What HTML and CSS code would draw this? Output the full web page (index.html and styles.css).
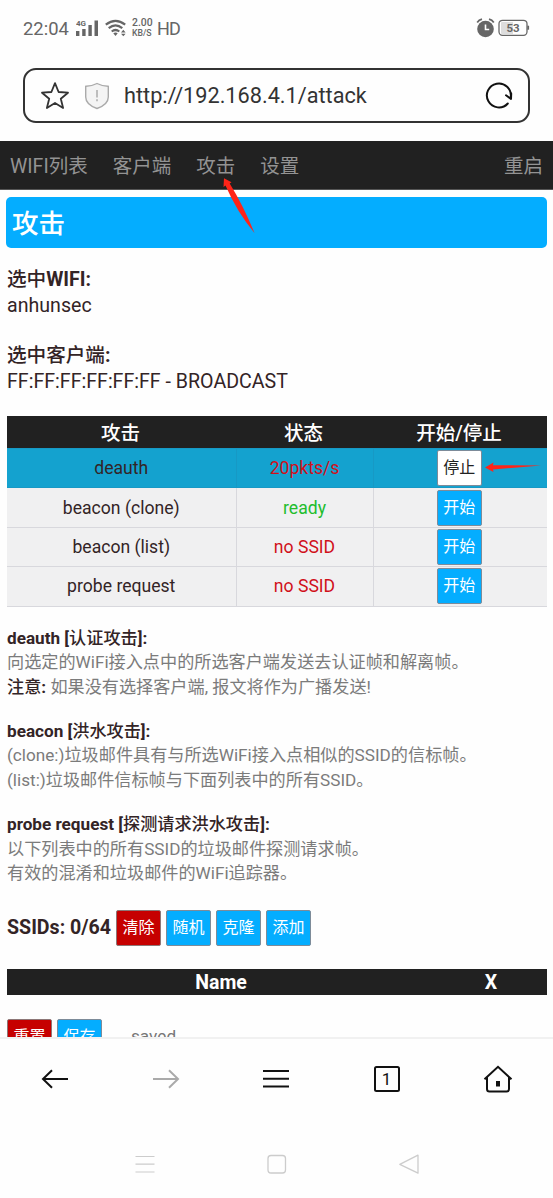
FILE: index.html
```html
<!DOCTYPE html>
<html lang="zh-CN">
<head>
<meta charset="utf-8">
<title>攻击</title>
<link rel="stylesheet" href="styles.css">
</head>
<body>
<div class="phone">
  <header class="status">
    <div class="status-left">
      <span class="clock">22:04</span>
      <svg class="signal" width="24" height="20" viewBox="0 0 24 20"><text x="0" y="8" class="net">4G</text><g fill="#666"><rect x="0" y="13" width="3.4" height="5"/><rect x="6.200" y="11" width="3.400" height="7"/><rect x="12.400" y="7" width="3.400" height="11"/><rect x="18.500" y="2.500" width="3.500" height="15.500"/></g></svg>
      <svg class="wifi" width="22" height="20" viewBox="0 0 22 20"><g fill="none" stroke="#666" stroke-width="2.200"><path d="M.8 6.700Q10.500-1 20.200 6.700"/><path d="M3.700 10.200Q10.500 4.600 17.300 10.200"/><path d="M6.700 13.500Q10.500 10.500 14.300 13.500"/></g><path d="M8.300 15.200Q10.500 13.600 12.700 15.200L10.500 18z" fill="#666"/><path d="M16 14.400l2.300-2.700 2.300 2.700zM16 15.700l2.300 2.500 2.300-2.500z" fill="#666"/></svg>
      <span class="speed"><span>2.00</span><span>KB/S</span></span>
      <span class="hd">HD</span>
    </div>
    <div class="status-right">
      <svg width="20" height="20" viewBox="0 0 20 20"><circle cx="9.500" cy="11" r="8.300" fill="#666"/><path d="M1.200 4.500Q3 2 6 1.200M13 1.200q3 .8 4.800 3.300" fill="none" stroke="#666" stroke-width="1.800"/><path d="M9.500 6.500v5h3.700" fill="none" stroke="#fff" stroke-width="1.600"/></svg>
      <svg width="32" height="18" viewBox="0 0 32 18"><path d="M4 3h11v12H4q-1 0-1-1V4q0-1 1-1z" fill="#ddd"/><rect x="1" y="1.300" width="28" height="15" rx="3.500" fill="none" stroke="#666" stroke-width="1.300"/><path d="M30.200 6.700v4" stroke="#666" stroke-width="1.800"/><text x="15" y="13" text-anchor="middle" class="charge">53</text></svg>
    </div>
  </header>

  <div class="address">
    <svg class="star" width="30" height="30" viewBox="0 0 30 30"><path d="M15 2.200l3.600 8.800 9.400.7-7.200 6.100 2.300 9.200-8.100-5-8.100 5 2.300-9.200L2 11.700l9.400-.7z" fill="none" stroke="#333" stroke-width="1.800" stroke-linejoin="round"/></svg>
    <svg class="shield" width="26" height="28" viewBox="0 0 26 28"><path d="M13 1.500Q18.500 4.300 24.300 4.200V15q0 7.500-11.300 11.500Q1.700 22.500 1.700 15V4.200Q7.500 4.300 13 1.500z" fill="#f4f4f4" stroke="#aaa" stroke-width="1.400" stroke-linejoin="round"/><path d="M13 8v7.500M13 17.300v2" stroke="#aaa" stroke-width="1.500"/></svg>
    <span class="url">http://192.168.4.1/attack</span>
    <svg class="reload" width="30" height="30" viewBox="0 0 30 30"><path d="M26.800 16A12 12 0 1 0 23.800 22.500" fill="none" stroke="#111" stroke-width="2" stroke-linecap="round"/><path d="M22 14.300l5 3.600.2-5.300" fill="none" stroke="#111" stroke-width="2" stroke-linejoin="round" stroke-linecap="round"/></svg>
  </div>

  <main class="page">
    <nav class="nav">
      <a>WIFI列表</a><a>客户端</a><a>攻击</a><a>设置</a><a class="reboot">重启</a>
      <svg class="pointer-up" width="34" height="58" viewBox="0 0 34 58"><path d="M2 .2L9.500 4.200 7.700 5.500Q21 27 32.500 55Q15 34 3.500 7.500L1.500 9z" fill="#ff2418"/></svg>
    </nav>
    <h1 class="title">攻击</h1>

    <section class="targets">
      <p><b><i>选中</i>WIFI:</b><br>anhunsec</p>
      <p><b><i>选中客户端</i>:</b><br>FF:FF:FF:FF:FF:FF - BROADCAST</p>
    </section>

    <table class="attacks">
      <colgroup><col class="c1"><col class="c2"><col class="c3"></colgroup>
      <thead><tr><th>攻击</th><th>状态</th><th>开始/停止</th></tr></thead>
      <tbody>
        <tr class="running"><td>deauth</td><td class="red">20pkts/s</td><td><button class="btn stop">停止</button><svg class="pointer-left" width="58" height="12" viewBox="0 0 58 12"><path d="M0 5.500L8.500.5 8 3.200 56 3.500 8 7.500 8.500 10z" fill="#ff2418"/></svg></td></tr>
        <tr><td>beacon (clone)</td><td class="green">ready</td><td><button class="btn">开始</button></td></tr>
        <tr><td>beacon (list)</td><td class="red">no SSID</td><td><button class="btn">开始</button></td></tr>
        <tr><td>probe request</td><td class="red">no SSID</td><td><button class="btn">开始</button></td></tr>
      </tbody>
    </table>

    <section class="notes">
      <p><b>deauth [<i>认证攻击</i>]:</b><br>向选定的WiFi接入点中的所选客户端发送去认证帧和解离帧。<br><b><i>注意</i>:</b> 如果没有选择客户端, 报文将作为广播发送!</p>
      <p><b>beacon [<i>洪水攻击</i>]:</b><br>(clone:)垃圾邮件具有与所选WiFi接入点相似的SSID的信标帧。<br>(list:)垃圾邮件信标帧与下面列表中的所有SSID。</p>
      <p><b>probe request [<i>探测请求洪水攻击</i>]:</b><br>以下列表中的所有SSID的垃圾邮件探测请求帧。<br>有效的混淆和垃圾邮件的WiFi追踪器。</p>
    </section>

    <div class="ssids">
      <b>SSIDs: 0/64</b>
      <button class="btn danger">清除</button><button class="btn">随机</button><button class="btn">克隆</button><button class="btn">添加</button>
    </div>
    <div class="names"><span>Name</span><span>X</span></div>
    <div class="save"><button class="btn danger">重置</button><button class="btn">保存</button><span>saved</span></div>
  </main>

  <footer class="toolbar">
    <svg viewBox="0 0 30 30"><path d="M28 15H3M12 6.300L3 15l9 8.700" fill="none" stroke="#111" stroke-width="2"/></svg>
    <svg viewBox="0 0 30 30"><path d="M2 15h25M18 6.300l9 8.700-9 8.700" fill="none" stroke="#aaa" stroke-width="2"/></svg>
    <svg viewBox="0 0 30 30"><path d="M2 7h26M2 14.700h26M2 22.400h26" fill="none" stroke="#111" stroke-width="2"/></svg>
    <svg viewBox="0 0 30 30"><rect x="3" y="3" width="24" height="24" rx="1.500" fill="none" stroke="#111" stroke-width="2"/><text x="14.500" y="21" text-anchor="middle" class="tabs">1</text></svg>
    <svg viewBox="0 0 30 30"><path d="M1.500 15.300L15 2.800l13.500 12.500M4 13.500V25q0 2.500 2.500 2.500h17Q26 27.500 26 25V13.500" fill="none" stroke="#111" stroke-width="2"/><path d="M13 17h4v5.500h-4z" fill="#111"/></svg>
  </footer>
  <div class="system">
    <svg viewBox="0 0 24 24"><path d="M2.500 4.500h19M2.500 12.200h19M2.500 20h19" fill="none" stroke="#ccc" stroke-width="1.200"/></svg>
    <svg viewBox="0 0 24 24"><rect x="3" y="3.500" width="17.500" height="17.500" rx="3" fill="none" stroke="#ccc" stroke-width="1.300"/></svg>
    <svg viewBox="0 0 24 24"><path d="M21 3.200v18L2.800 12.300z" fill="none" stroke="#ccc" stroke-width="1.300" stroke-linejoin="round"/></svg>
  </div>
</div>
</body>
</html>
```

FILE: styles.css
```css
* { box-sizing: border-box; }
body { margin: 0; background: #fefefe; font-family: Roboto, "Noto Sans CJK SC", sans-serif; color: #332426; }
svg { display: block; flex: none; }
b { font-weight: 700; }
i { font-style: normal; font-weight: 500; }
p, h1 { margin: 0; }

.phone { width: 553px; height: 1198px; overflow: hidden; display: flex; flex-direction: column; }

.status { height: 68px; padding: 17px 22px 0 23px; display: flex; justify-content: space-between; color: #666; flex: none; }
.status-left, .status-right { display: flex; align-items: center; height: 22px; }
.clock { font-size: 18.400px; width: 53px; }
.net { font: bold 8px Roboto, sans-serif; fill: #666; }
.wifi { margin-left: 5px; }
.speed { display: flex; flex-direction: column; width: 21px; margin: 0 0 0 5px; line-height: 10px; font-weight: 500; white-space: nowrap; }
.speed span:first-child { font-size: 10.400px; }
.speed span:last-child { font-size: 8.700px; }
.hd { font-size: 18px; margin-left: 4px; letter-spacing: -.8px; }
.status-right { gap: 2px; height: 21px; margin-right: 1px; }
.charge { font: bold 11.500px Roboto, sans-serif; fill: #666; }

.address { height: 55px; margin: 0 23px; border: 2px solid #333; border-radius: 13px; display: flex; align-items: center; padding: 0 14px 0 15px; flex: none; }
.shield { margin-left: 14px; }
.url { margin-left: 14px; font-size: 21.700px; color: #333; flex: 1; }

.page { height: 896px; overflow: hidden; margin-top: 18px; flex: none; }
.nav { position: relative; height: 49px; background: #212121; border-bottom: 1px solid #555; display: flex; align-items: center; gap: 25px; padding: 3px 10px 0; color: #939393; font-size: 19.500px; }
.nav a { line-height: 45px; }
.reboot { margin-left: auto; }
.pointer-up { position: absolute; left: 222px; top: 37px; z-index: 1; }

.title { height: 51px; margin: 7px 6px 0; padding-left: 6px; background: #04adff; color: #fff; border-radius: 5px; font-size: 26.500px; line-height: 54px; font-weight: 500; }

.targets { margin-top: 19px; padding-left: 7px; display: grid; gap: 24px; font-size: 19.600px; line-height: 26px; }

.attacks { width: 540px; margin: 21px 0 0 7px; border-collapse: collapse; table-layout: fixed; font-size: 17.600px; text-align: center; }
.c1 { width: 229px; }
.c2 { width: 137px; }
.c3 { width: 174px; }
.attacks th { height: 32px; padding: 3px 2px 0 0; background: #212121; color: #fff; font-size: 19.500px; font-weight: 500; line-height: 29px; }
.attacks td { height: 39.400px; padding: 0; background: #f0f0f1; border: 1px solid #d8d8dd; line-height: 36px; }
.attacks td:last-child { position: relative; padding-right: 2px; }
.attacks .btn { margin: 0 auto; }
.attacks .running td { background: #14a2cf; border-color: #1799c5; }
.attacks tr > :last-child { border-right: 0; }
.attacks tr > :first-child { border-left: 0; }
.red { color: #d0101b; }
.green { color: #22bd2d; }
.pointer-left { position: absolute; left: 111px; top: 13px; }

.btn { display: block; width: 45px; height: 36px; padding: 0; border: 1px solid #7d8b99; border-radius: 2px; background: #04adff; color: #fff; font: 400 16px/34px Roboto, "Noto Sans CJK SC", sans-serif; }
.stop { background: #fff; color: #222; }
.danger { background: #c60000; border-color: #8d7777; }

.notes { margin-top: 19px; padding-left: 7px; display: grid; gap: 19.800px; font-size: 17.150px; line-height: 24.500px; color: #7b7b7b; white-space: nowrap; }
.notes b { color: #332426; }

.ssids { display: flex; align-items: center; gap: 5px; margin-top: 24px; padding-left: 7px; height: 36px; }
.ssids b { font-size: 19.600px; width: 104px; white-space: nowrap; }
.names { height: 26px; margin: 23px 6px 0 7px; background: #212121; color: #fff; font-size: 19.500px; line-height: 27px; font-weight: 700; display: grid; grid-template-columns: 428px 112px; text-align: center; }
.save { display: flex; gap: 5px; margin-top: 24px; padding-left: 7px; font-size: 17.200px; line-height: 35px; color: #777; }
.save span { margin-left: 24px; }

.toolbar { height: 84px; border-top: 2px solid #f1f1f1; padding-top: 25px; display: grid; grid-template-columns: repeat(5, 110.600px); justify-items: center; flex: none; }
.toolbar svg { width: 30px; height: 30px; }
.tabs { font: 400 17px Roboto, sans-serif; fill: #111; }
.system { display: grid; grid-template-columns: repeat(3, 132px); justify-content: center; justify-items: center; padding-top: 31px; }
.system svg { width: 24px; height: 24px; }
```
